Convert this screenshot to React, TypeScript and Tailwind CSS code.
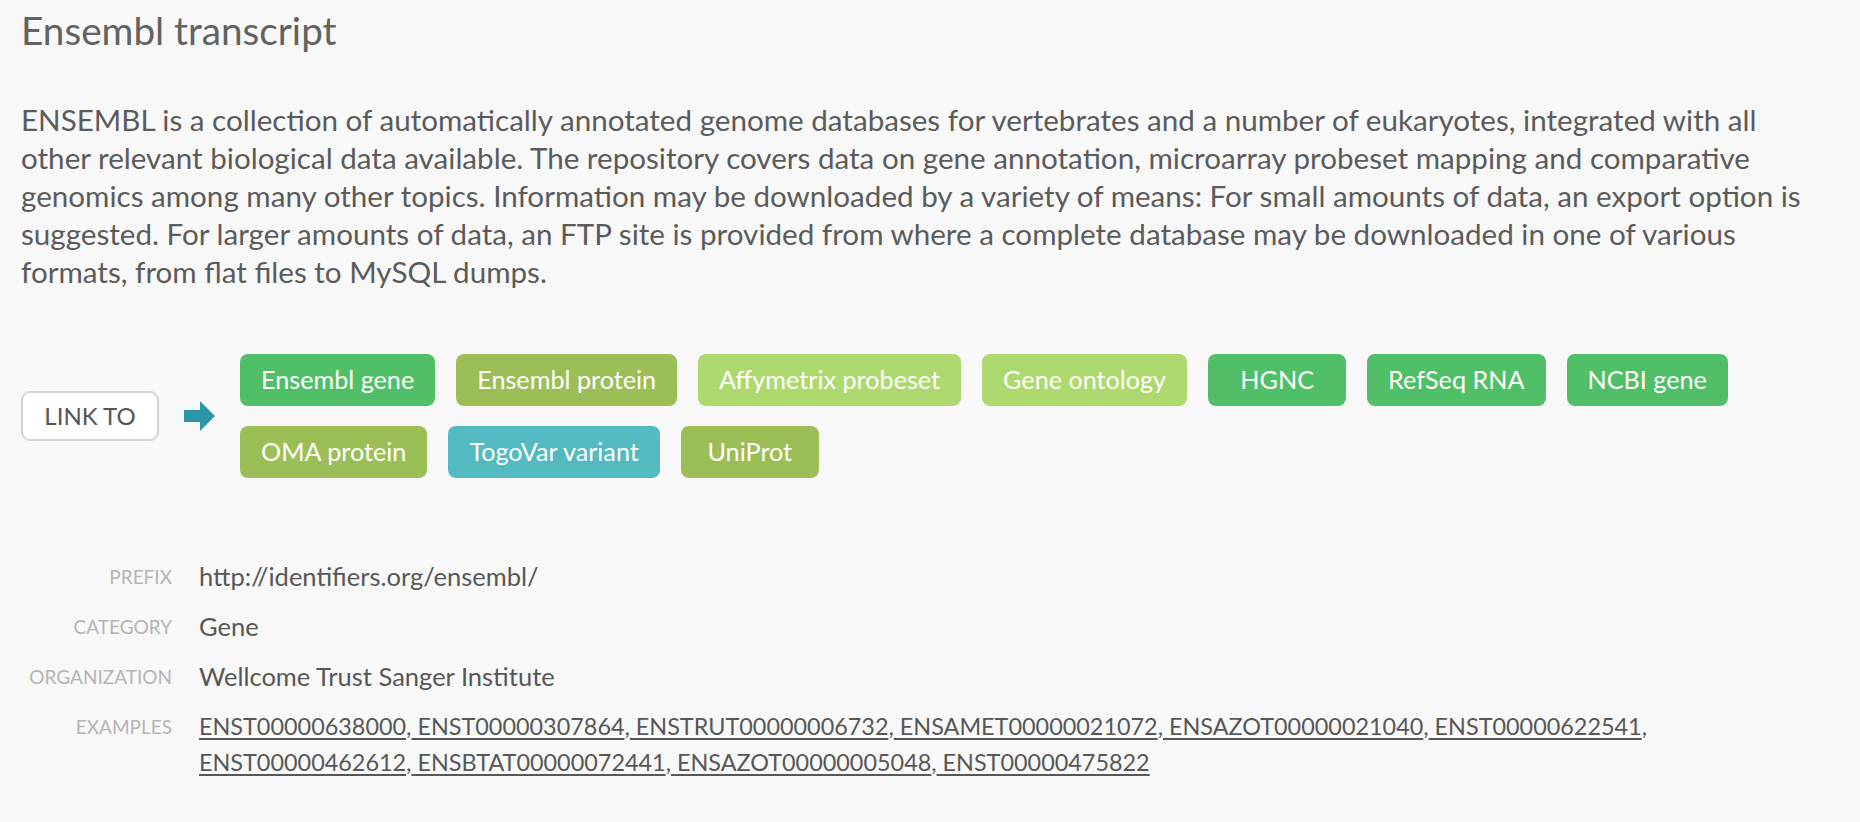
import React from "react";

const tags = [
  [
    { label: "Ensembl gene", color: "bg-[#51bf67]" },
    { label: "Ensembl protein", color: "bg-[#9bbe56]" },
    { label: "Affymetrix probeset", color: "bg-[#aed96e]" },
    { label: "Gene ontology", color: "bg-[#aed96e]" },
    { label: "HGNC", color: "bg-[#51bf67]" },
    { label: "RefSeq RNA", color: "bg-[#51bf67]" },
    { label: "NCBI gene", color: "bg-[#51bf67]" },
  ],
  [
    { label: "OMA protein", color: "bg-[#9bbe56]" },
    { label: "TogoVar variant", color: "bg-[#52bac0]" },
    { label: "UniProt", color: "bg-[#9bbe56]" },
  ],
];

const examples = [
  [
    "ENST00000638000",
    "ENST00000307864",
    "ENSTRUT00000006732",
    "ENSAMET00000021072",
    "ENSAZOT00000021040",
    "ENST00000622541",
  ],
  ["ENST00000462612", "ENSBTAT00000072441", "ENSAZOT00000005048", "ENST00000475822"],
];

const paragraph = [
  "ENSEMBL is a collection of automatically annotated genome databases for vertebrates and a number of eukaryotes, integrated with all",
  "other relevant biological data available. The repository covers data on gene annotation, microarray probeset mapping and comparative",
  "genomics among many other topics. Information may be downloaded by a variety of means: For small amounts of data, an export option is",
  "suggested. For larger amounts of data, an FTP site is provided from where a complete database may be downloaded in one of various",
  "formats, from flat files to MySQL dumps.",
];

const Tag = ({ label, color }: { label: string; color: string }) => (
  <a
    href="#"
    className={`${color} h-[52px] min-w-[138px] px-[21px] rounded-[8px] flex items-center justify-center text-white text-[25.2px]`}
  >
    {label}
  </a>
);

const InfoRow = ({ label, children }: { label: string; children: React.ReactNode }) => (
  <>
    <div className="text-right text-[19px] uppercase text-[#b5b5b5] leading-[36px] pt-[1px]">{label}</div>
    <div className="text-[25.5px] text-[#575757] leading-[36px]">{children}</div>
  </>
);

export default function App() {
  return (
    <div className="min-h-screen bg-[#f8f8f8] px-[21px] pt-[6px] font-['Lato',sans-serif] text-[#5b5b5b]">
      <h1 className="text-[38.7px] leading-[48px] text-[#626262]">Ensembl transcript</h1>

      <p className="mt-[47px] text-[29.6px] leading-[38px] whitespace-nowrap">
        {paragraph.map((line, i) => (
          <React.Fragment key={i}>
            {line}
            {i < paragraph.length - 1 && <br />}
          </React.Fragment>
        ))}
      </p>

      <div className="mt-[63px] flex items-center">
        <button className="w-[138px] h-[50px] bg-white border-2 border-[#d4d4d4] rounded-[9px] text-[24px] text-[#555]">
          LINK TO
        </button>
        <svg className="ml-[25px] w-[31px] h-[30px]" viewBox="0 0 31 30">
          <path d="M0 9h16V0l15 15-15 15v-9H0z" fill="#2a96a8" />
        </svg>
        <div className="ml-[25px] flex flex-col gap-[20px]">
          {tags.map((row, i) => (
            <div key={i} className="flex gap-[21px]">
              {row.map((t) => (
                <Tag key={t.label} label={t.label} color={t.color} />
              ))}
            </div>
          ))}
        </div>
      </div>

      <div className="mt-[80px] grid grid-cols-[151px_1fr] gap-x-[27px] gap-y-[13px] pb-[30px]">
        <InfoRow label="Prefix">http://identifiers.org/ensembl/</InfoRow>
        <InfoRow label="Category">Gene</InfoRow>
        <InfoRow label="Organization">Wellcome Trust Sanger Institute</InfoRow>
        <InfoRow label="Examples">
          <div className="text-[23.4px]">
            {examples.map((line, li) => (
              <div key={li} className="whitespace-nowrap">
                {line.map((id, i) => (
                  <React.Fragment key={id}>
                    {i > 0 && ","}
                    <a href="#" className="underline decoration-2 underline-offset-[3px]">
                      {i > 0 ? ` ${id}` : id}
                    </a>
                  </React.Fragment>
                ))}
                {li === 0 && ","}
              </div>
            ))}
          </div>
        </InfoRow>
      </div>
    </div>
  );
}
